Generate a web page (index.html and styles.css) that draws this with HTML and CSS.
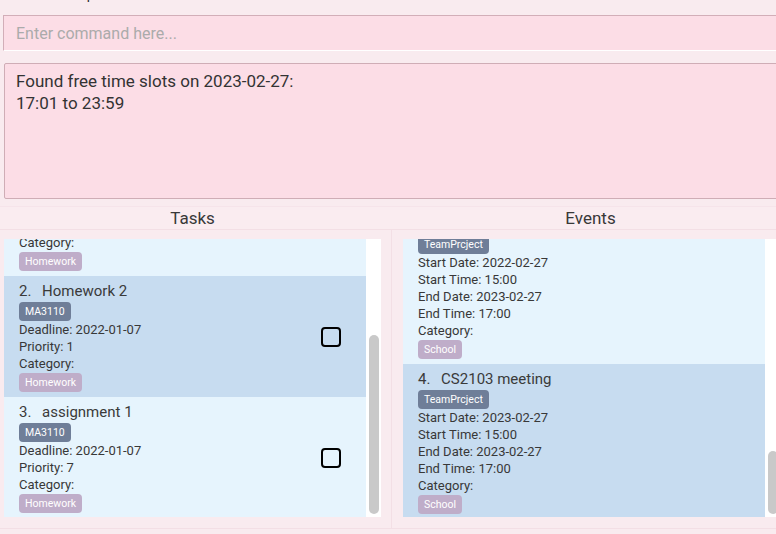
FILE: index.html
```html
<!DOCTYPE html>
<html lang="en">
<head>
<meta charset="utf-8">
<title>Planner</title>
<link rel="stylesheet" href="styles.css">
</head>
<body>
<div class="app">
  <div class="menubar">
    <div class="menu-inner"><span class="menu-file">File</span><span class="menu-help">Help</span></div>
  </div>
  <input class="command" type="text" placeholder="Enter command here...">
  <div class="result">Found free time slots on 2023-02-27:<br>17:01 to 23:59</div>

  <div class="headers">
    <div class="head head-tasks">Tasks</div>
    <div class="head head-events">Events</div>
  </div>

  <div class="lists">
    <div class="col col-tasks">
      <div class="list">
        <div class="cards">
          <div class="card light partial">
            <div class="body">
              <div class="line">Category:</div>
              <div class="tags"><span class="tag cat">Homework</span></div>
            </div>
          </div>
          <div class="card dark">
            <div class="body">
              <div class="title">2. <span class="name">Homework 2</span></div>
              <div class="tags"><span class="tag mod">MA3110</span></div>
              <div class="line">Deadline: 2022-01-07</div>
              <div class="line">Priority: 1</div>
              <div class="line">Category:</div>
              <div class="tags"><span class="tag cat">Homework</span></div>
            </div>
            <div class="check"></div>
          </div>
          <div class="card light">
            <div class="body">
              <div class="title">3. <span class="name">assignment 1</span></div>
              <div class="tags"><span class="tag mod">MA3110</span></div>
              <div class="line">Deadline: 2022-01-07</div>
              <div class="line">Priority: 7</div>
              <div class="line">Category:</div>
              <div class="tags"><span class="tag cat">Homework</span></div>
            </div>
            <div class="check"></div>
          </div>
        </div>
        <div class="track"><div class="thumb thumb-tasks"></div></div>
      </div>
    </div>

    <div class="col col-events">
      <div class="list">
        <div class="cards">
          <div class="card light partial">
            <div class="body">
              <div class="tags"><span class="tag mod">TeamPrcject</span></div>
              <div class="line">Start Date: 2022-02-27</div>
              <div class="line">Start Time: 15:00</div>
              <div class="line">End Date: 2023-02-27</div>
              <div class="line">End Time: 17:00</div>
              <div class="line">Category:</div>
              <div class="tags"><span class="tag cat">School</span></div>
            </div>
          </div>
          <div class="card dark">
            <div class="body">
              <div class="title">4. <span class="name">CS2103 meeting</span></div>
              <div class="tags"><span class="tag mod">TeamPrcject</span></div>
              <div class="line">Start Date: 2023-02-27</div>
              <div class="line">Start Time: 15:00</div>
              <div class="line">End Date: 2023-02-27</div>
              <div class="line">End Time: 17:00</div>
              <div class="line">Category:</div>
              <div class="tags"><span class="tag cat">School</span></div>
            </div>
          </div>
        </div>
        <div class="track"><div class="thumb thumb-events"></div></div>
      </div>
    </div>
  </div>
</div>
</body>
</html>
```

FILE: styles.css
```css
* { box-sizing: border-box; }

html, body {
  margin: 0;
  padding: 0;
}

body {
  background: #f9ebef;
  font-family: Roboto, "Liberation Sans", sans-serif;
  color: #383838;
  overflow: hidden;
  width: 776px;
  height: 534px;
}

.app {
  width: 790px;
}

.menubar {
  height: 15px;
  overflow: hidden;
}

.menu-inner {
  margin-top: -14px;
  height: 16px;
  line-height: 16px;
  font-size: 14px;
  color: #2e2e2e;
  display: flex;
}

.menu-file { margin-left: 14px; }
.menu-help { margin-left: 30px; }

.command {
  display: block;
  width: 787px;
  height: 36px;
  margin: 0 0 12px 3px;
  padding: 0 0 0 12px;
  border: none;
  border-top: 1px solid #d2aeb8;
  border-left: 1px solid #d2aeb8;
  border-bottom: 1px solid #ffffff;
  background: #fcdde6;
  font-family: Roboto, "Liberation Sans", sans-serif;
  font-size: 16px;
  color: #383838;
  outline: none;
}

.command::placeholder {
  color: #ababab;
}

.result {
  margin-left: 4px;
  height: 136px;
  padding: 6px 11px;
  border: 1px solid #cfadb6;
  border-radius: 2px;
  background: #fcdde6;
  font-size: 17px;
  line-height: 22px;
  color: #333333;
}

.headers {
  margin-top: 7px;
  display: grid;
  grid-template-columns: 391px 1fr;
  border-top: 1px solid #f6e4ea;
  border-bottom: 1px solid #f3dfe5;
  background: #faecf0;
}

.head {
  height: 22px;
  line-height: 23px;
  font-size: 17px;
  text-align: center;
  color: #383838;
}

.head-tasks { padding: 0 10px 0 4px; }

.lists {
  display: grid;
  grid-template-columns: 391px 1fr;
  height: 299px;
  border-bottom: 1px solid #f3dfe5;
}

.col-tasks { padding: 9px 10px 0 4px; }

.col-events {
  border-left: 1px solid #f3dfe5;
  padding: 9px 0 0 11px;
}

.list {
  display: flex;
  height: 278px;
}

.cards {
  width: 362px;
  overflow: hidden;
}

.track {
  width: 15px;
  background: #ffffff;
  display: flex;
  flex-direction: column;
  justify-content: flex-end;
  padding: 0 2px 3px 3px;
}

.thumb {
  width: 10px;
  background: #c9c9c9;
  border-radius: 5px;
}

.thumb-tasks { height: 179px; }
.thumb-events { height: 63px; }

.card {
  display: flex;
  align-items: center;
  padding: 5px 0 5px 15px;
}

.card.light { background: #e6f4fd; }
.card.dark { background: #c7dcf0; }

.card.partial {
  margin-top: -5px;
  padding-top: 0;
}

.body {
  flex: 1;
}

.title {
  font-size: 15px;
  line-height: 20px;
  height: 20px;
  color: #3a3a3a;
  white-space: nowrap;
}

.title .name { margin-left: 7px; }

.tags {
  display: flex;
  gap: 4px;
  margin-top: 1px;
  height: 19px;
}

.tag {
  display: inline-block;
  height: 19px;
  line-height: 19px;
  padding: 0 6px;
  border-radius: 4px;
  font-size: 10.5px;
  color: #ffffff;
}

.tag.mod { background: #6f7e98; }
.tag.cat { background: #bfadc9; }

.line {
  font-size: 13px;
  line-height: 17px;
  height: 17px;
  color: #383838;
}

.check {
  width: 20px;
  height: 20px;
  flex-shrink: 0;
  border: 2px solid #000000;
  border-radius: 4px;
  margin-right: 25px;
}
```
